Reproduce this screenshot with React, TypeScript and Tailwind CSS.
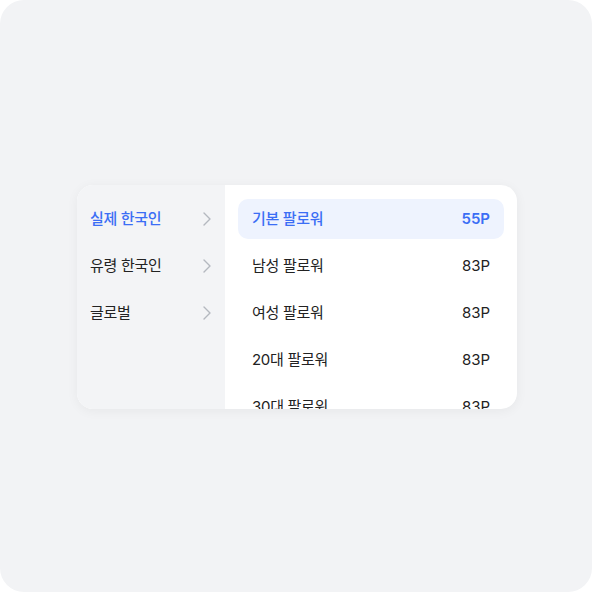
import React from 'react';

const categories = [
  { label: '실제 한국인', active: true },
  { label: '유령 한국인', active: false },
  { label: '글로벌', active: false },
];

const products = [
  { label: '기본 팔로워', price: '55P', active: true },
  { label: '남성 팔로워', price: '83P', active: false },
  { label: '여성 팔로워', price: '83P', active: false },
  { label: '20대 팔로워', price: '83P', active: false },
  { label: '30대 팔로워', price: '83P', active: false },
  { label: '40대 팔로워', price: '83P', active: false },
];

const font = { fontFamily: 'Inter, "Noto Sans CJK KR", sans-serif' };

const Chevron = () => (
  <svg width="16" height="16" viewBox="0 0 16 16" fill="none">
    <path d="M6 2l6 6-6 6" stroke="#b4b8bf" strokeWidth="1.4" strokeLinecap="round" strokeLinejoin="round" />
  </svg>
);

export default function App() {
  return (
    <div className="w-[592px] h-[592px] bg-white" style={font}>
      <div className="w-full h-full rounded-[24px] bg-[#f2f3f5] flex items-center justify-center pl-[2px] pt-[2px]">
        <div className="w-[440px] h-[224px] rounded-[16px] overflow-hidden flex bg-white shadow-[0_2px_12px_rgba(0,0,0,0.05)]">
          {/* categories */}
          <div className="w-[148px] shrink-0 bg-[#f3f4f6] pt-[14px] pl-[13px] pr-[11px] flex flex-col gap-[7px]">
            {categories.map((c) => (
              <div key={c.label} className="h-[40px] flex items-center justify-between">
                <span className={`text-[15px] tracking-[-0.02em] ${c.active ? 'text-[#3b6ef5] font-medium' : 'text-[#222]'}`}>
                  {c.label}
                </span>
                <Chevron />
              </div>
            ))}
          </div>
          {/* products */}
          <div className="flex-1 pt-[14px] px-[13px] flex flex-col gap-[7px] overflow-hidden">
            {products.map((p) => (
              <div
                key={p.label}
                className={`h-[40px] shrink-0 rounded-[10px] px-[14px] flex items-center justify-between ${p.active ? 'bg-[#eef3fe]' : ''}`}
              >
                <span className={`text-[15px] tracking-[-0.02em] ${p.active ? 'text-[#3b6ef5] font-medium' : 'text-[#222]'}`}>
                  {p.label}
                </span>
                <span className={`text-[15px] ${p.active ? 'text-[#3b6ef5] font-semibold' : 'text-[#222]'}`}>{p.price}</span>
              </div>
            ))}
          </div>
        </div>
      </div>
    </div>
  );
}
